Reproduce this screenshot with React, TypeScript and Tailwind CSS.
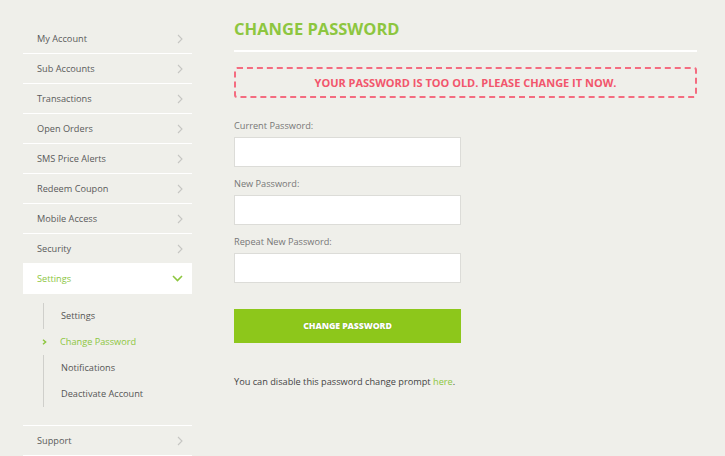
import React from "react";

const menu = [
  "My Account",
  "Sub Accounts",
  "Transactions",
  "Open Orders",
  "SMS Price Alerts",
  "Redeem Coupon",
  "Mobile Access",
  "Security",
];

const subMenu = [
  { name: "Settings", active: false },
  { name: "Change Password", active: true },
  { name: "Notifications", active: false },
  { name: "Deactivate Account", active: false },
];

function Chevron({ down = false, color = "#c6c6c3" }: { down?: boolean; color?: string }) {
  if (down) {
    return (
      <svg width="11" height="7" viewBox="0 0 11 7" fill="none">
        <polyline points="1,1 5.5,5.5 10,1" stroke={color} strokeWidth="1.6" />
      </svg>
    );
  }
  return (
    <svg width="6" height="10" viewBox="0 0 6 10" fill="none">
      <polyline points="1,1 5,5 1,9" stroke={color} strokeWidth="1.1" />
    </svg>
  );
}

function MenuRow({ label, active = false }: { label: string; active?: boolean }) {
  return (
    <div
      className={`flex h-[30px] items-center justify-between border-b border-white pl-[14px] pr-[9px] ${
        active ? "bg-white text-[#8dc63f]" : "text-[#5a5a5a]"
      }`}
    >
      <span className="text-[9.2px] leading-[14px]">{label}</span>
      {active ? <Chevron down color="#8dc63f" /> : <Chevron />}
    </div>
  );
}

export default function App() {
  return (
    <div
      className="flex h-[456px] w-full overflow-hidden bg-[#efefea] pl-[23px]"
      style={{ fontFamily: '"Open Sans", "Liberation Sans", sans-serif' }}
    >
      {/* Sidebar */}
      <aside className="w-[169px] shrink-0 pt-[24px]">
        {menu.map((item) => (
          <MenuRow key={item} label={item} />
        ))}
        <MenuRow label="Settings" active />

        <div className="border-b border-white pb-[18px] pl-[20px] pt-[9px]">
          {subMenu.map((item) => (
            <div
              key={item.name}
              className={`relative flex h-[26px] items-center pl-[17px] text-[9.2px] leading-[14px] ${
                item.active ? "text-[#8dc63f]" : "border-l border-[#cfcfcb] text-[#555]"
              }`}
            >
              {item.active && (
                <svg
                  className="absolute left-[-1px] top-[10px]"
                  width="5"
                  height="6"
                  viewBox="0 0 5 6"
                  fill="none"
                >
                  <polyline points="1,0.8 3.6,3 1,5.2" stroke="#8dc63f" strokeWidth="1.5" />
                </svg>
              )}
              {item.name}
            </div>
          ))}
        </div>

        <MenuRow label="Support" />
      </aside>

      {/* Main content */}
      <main className="ml-[42px] w-[463px] pt-[17px]">
        <h1 className="border-b-2 border-white pb-[9px] text-[16.5px] font-bold leading-[24px] text-[#8dc63f]">
          CHANGE PASSWORD
        </h1>

        <div className="mt-[15px] flex h-[31px] items-center justify-center rounded-[3px] border-2 border-dashed border-[#f46c80] text-[11px] font-bold leading-[16px] text-[#f2566c]">
          YOUR PASSWORD IS TOO OLD. PLEASE CHANGE IT NOW.
        </div>

        <form className="mt-[21px] w-[227px]">
          {["Current Password:", "New Password:", "Repeat New Password:"].map((label) => (
            <div key={label} className="mb-[10px]">
              <label className="block text-[9.2px] leading-[14px] text-[#777]">{label}</label>
              <input
                type="password"
                className="mt-[4px] block h-[30px] w-full border border-[#dcdcd8] bg-white outline-none"
              />
            </div>
          ))}

          <button
            type="button"
            className="mt-[26px] flex h-[34px] w-full items-center justify-center bg-[#8dc71b] text-[8.75px] font-extrabold leading-[12px] tracking-[-0.1px] text-white [text-shadow:0_0_1px_rgba(0,0,0,0.25)]"
          >
            CHANGE PASSWORD
          </button>
        </form>

        <p className="mt-[32px] text-[9.2px] leading-[14px] text-[#444]">
          You can disable this password change prompt{" "}
          <a className="text-[#8dc63f]">here</a>.
        </p>
      </main>
    </div>
  );
}
